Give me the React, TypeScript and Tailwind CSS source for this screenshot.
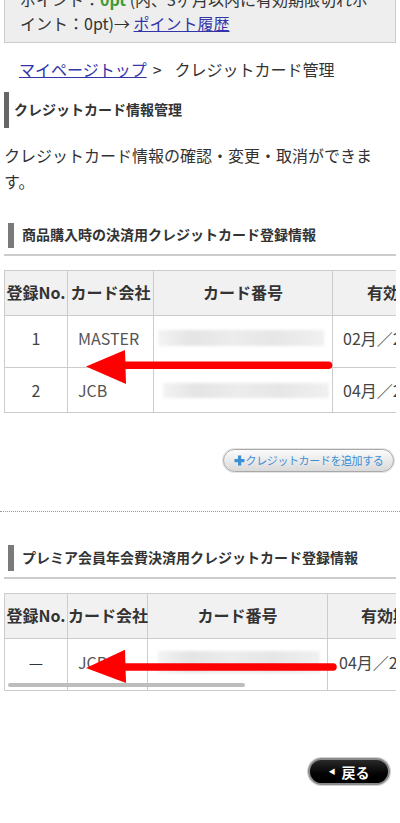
import React from "react";

function CardBar({ className }: { className: string }) {
  return (
    <div
      className={
        "bg-[linear-gradient(90deg,#f3f3f3_0%,#e4e4e4_20%,#ececec_45%,#e6e6e6_70%,#f0f0f0_100%)] blur-[1.5px] " +
        className
      }
    />
  );
}

function Heading({ children, barH }: { children: React.ReactNode; barH: string }) {
  return (
    <div className="border-b-2 border-[#cccccc] pb-[6px]">
      <div
        className={
          "ml-[4px] flex items-center border-l-[6px] border-[#7a7a7a] pl-[8px] pb-[2px] text-[14px] font-bold text-[#333] " +
          barH
        }
      >
        {children}
      </div>
    </div>
  );
}

export default function App() {
  const th = "border border-[#cccccc] bg-[#f1f1f1] p-0 pb-[2px] text-center text-[16px] font-bold whitespace-nowrap text-[#333]";
  const td = "border border-[#cccccc] p-0 text-[16px] leading-[24px] whitespace-nowrap";
  return (
    <div className="relative w-[400px] overflow-hidden bg-white px-[4px] pb-[40px] font-['Noto_Sans_CJK_JP','Noto_Sans',sans-serif] text-[#333]">
      {/* points box */}
      <div className="mt-[-22px] border border-[#cccccc] bg-[#eeeeee] pl-[15px] pr-[8px] pt-[8px] pb-[7px] text-[16px] leading-[24px] whitespace-nowrap">
        ポイント：<span className="font-bold text-[#3d9b35]">0pt</span> (内、3ヶ月以内に有効期限切れポ
        <br />
        イント：0pt)→ <a className="text-[#3333aa] underline">ポイント履歴</a>
      </div>

      {/* breadcrumb */}
      <div className="mt-[14px] pl-[15px] text-[16px] leading-[24px]">
        <a className="text-[#3333aa] underline">マイページトップ</a>
        <span className="ml-[6px]">&gt;</span>
        <span className="ml-[13px]">クレジットカード管理</span>
      </div>

      {/* h1 */}
      <div className="mt-[11px] flex h-[36px] items-center border-l-[5px] border-[#666666] pl-[5px] pb-[2px] text-[14px] font-bold">
        クレジットカード情報管理
      </div>

      <p className="mt-[14px] pr-[16px] text-[16px] leading-[26px]">
        クレジットカード情報の確認・変更・取消ができます。
      </p>

      <div className="mt-[29px]">
        <Heading barH="h-[25px]">商品購入時の決済用クレジットカード登録情報</Heading>
      </div>

      {/* table 1 */}
      <div className="relative mt-[14px] overflow-hidden">
        <table className="w-[461px] table-fixed border-collapse">
          <colgroup>
            <col className="w-[63px]" />
            <col className="w-[86px]" />
            <col className="w-[179px]" />
            <col className="w-[133px]" />
          </colgroup>
          <thead>
            <tr>
              <th className={th + " h-[45px]"}>登録No.</th>
              <th className={th}>カード会社</th>
              <th className={th}>カード番号</th>
              <th className={th}>有効期限</th>
            </tr>
          </thead>
          <tbody>
            <tr>
              <td className={td + " h-[52px] pt-[10px] align-top text-center text-[#444]"}>1</td>
              <td className={td + " pt-[10px] pl-[10px] align-top text-[#555]"}>MASTER</td>
              <td className={td + " pt-[14px] align-top"}>
                <CardBar className="ml-[4px] h-[16px] w-[166px]" />
              </td>
              <td className={td + " pt-[10px] pl-[10px] align-top text-[#444]"}>02月／2026年</td>
            </tr>
            <tr>
              <td className={td + " h-[45px] align-middle text-center text-[#444]"}>2</td>
              <td className={td + " pl-[10px] align-middle text-[#555]"}>JCB</td>
              <td className={td + " align-middle"}>
                <CardBar className="ml-[9px] h-[15px] w-[166px]" />
              </td>
              <td className={td + " pl-[10px] align-middle text-[#444]"}>04月／2027年</td>
            </tr>
          </tbody>
        </table>
        <svg className="pointer-events-none absolute left-0 top-0" width="392" height="142" viewBox="0 0 392 142">
          <line x1="118" y1="95.2" x2="324.5" y2="95.2" stroke="#ff0000" strokeWidth="7.5" strokeLinecap="round" />
          <polygon points="82,96.5 121,80 122,114" fill="#ff0000" />
        </svg>
      </div>

      {/* add button */}
      <div className="mt-[36px] flex justify-end pr-[2px]">
        <button className="flex h-[23px] w-[171px] items-center justify-center gap-[1px] rounded-full border border-[#a8a8a8] bg-gradient-to-b from-[#fbfbfb] to-[#dadada] text-[11px] tracking-[-0.4px] text-[#3d8fd6] shadow-[0_0_0_1px_#e4e4e4]">
          <svg width="11" height="11" viewBox="0 0 11 11">
            <rect x="4" y="0.5" width="3.2" height="10" fill="#3a8fd6" />
            <rect x="0.5" y="4" width="10" height="3.2" fill="#3a8fd6" />
          </svg>
          <span>クレジットカードを追加する</span>
        </button>
      </div>

      {/* dotted separator */}
      <div className="-mx-[4px] mt-[39px] border-t border-dotted border-[#999999]" />

      <div className="mt-[33px]">
        <Heading barH="h-[26px]">プレミア会員年会費決済用クレジットカード登録情報</Heading>
      </div>

      {/* table 2 */}
      <div className="relative mt-[14px] overflow-hidden">
        <table className="w-[454px] table-fixed border-collapse">
          <colgroup>
            <col className="w-[63px]" />
            <col className="w-[80px]" />
            <col className="w-[180px]" />
            <col className="w-[131px]" />
          </colgroup>
          <thead>
            <tr>
              <th className={th + " h-[45px]"}>登録No.</th>
              <th className={th}>カード会社</th>
              <th className={th}>カード番号</th>
              <th className={th}>有効期限</th>
            </tr>
          </thead>
          <tbody>
            <tr>
              <td className={td + " h-[52px] pb-[6px] align-middle text-center text-[#333]"}>—</td>
              <td className={td + " pb-[6px] pl-[10px] align-middle text-[#555]"}>JCB</td>
              <td className={td + " pb-[6px] align-middle"}>
                <CardBar className="ml-[10px] h-[22px] w-[162px]" />
              </td>
              <td className={td + " pb-[6px] pl-[11px] align-middle text-[#444]"}>04月／2027年</td>
            </tr>
          </tbody>
        </table>
        <div className="absolute left-[4px] top-[90px] h-[4px] w-[237px] rounded-full bg-[#bdbdbd]" />
        <svg className="pointer-events-none absolute left-0 top-0" width="392" height="100" viewBox="0 0 392 100">
          <line x1="118" y1="74" x2="329" y2="74" stroke="#ff0000" strokeWidth="7.5" strokeLinecap="round" />
          <polygon points="82,75 121,56.7 122,90" fill="#ff0000" />
        </svg>
      </div>

      {/* back button */}
      <div className="mt-[67px] flex justify-end pr-[6px]">
        <button className="flex h-[27px] w-[82px] items-center justify-center gap-[6px] rounded-full border-2 border-[#8a8a8a] bg-gradient-to-b from-[#2a2a2a] to-[#000000] text-[14px] font-bold leading-none text-white shadow-[0_0_0_1px_#d0d0d0]">
          <span className="text-[7px]">◀</span>
          <span>戻る</span>
        </button>
      </div>
    </div>
  );
}
